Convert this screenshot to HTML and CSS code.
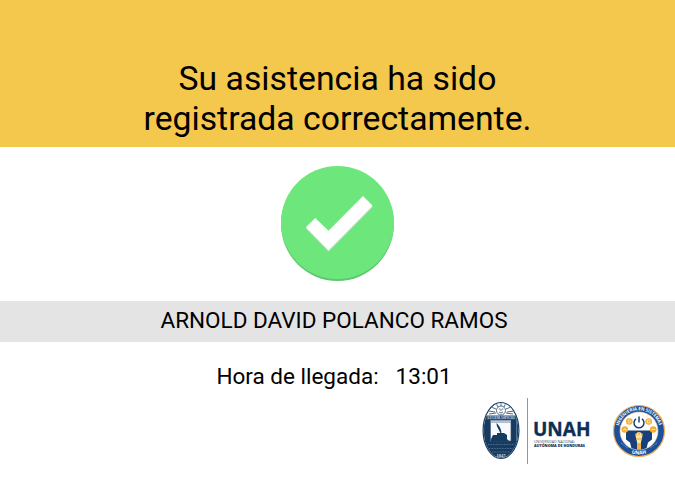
FILE: index.html
```html
<!DOCTYPE html>
<html lang="es">
<head>
<meta charset="utf-8">
<title>Registro de asistencia</title>
<link rel="stylesheet" href="styles.css">
</head>
<body>
<header class="banner">
  <h1 class="title">Su asistencia ha sido<br>registrada correctamente.</h1>
</header>
<main class="content">
  <svg class="check" width="115" height="117" viewBox="0 0 115 117">
    <ellipse cx="57.5" cy="59" rx="56.5" ry="57" fill="#5fc66d"/>
    <ellipse cx="57.5" cy="57.5" rx="56.5" ry="56.5" fill="#6de77b"/>
    <path d="M26 63.5L35.3 54.500L48.500 67.200L83 32.500L92.500 42L48.500 86.500Z" fill="#d5ead8"/>
    <path d="M26 62L35.300 53L48.500 65.700L83 31L92.500 40.500L48.500 85Z" fill="#fff"/>
  </svg>
  <div class="name">ARNOLD DAVID POLANCO RAMOS</div>
  <div class="arrival"><span>Hora de llegada:</span><span>13:01</span></div>
</main>
<footer class="logos">
  <svg class="seal" width="38" height="59" viewBox="482 400 38 59">
    <defs>
      <clipPath id="oval"><ellipse cx="501" cy="429.500" rx="17.300" ry="27.300"/></clipPath>
    </defs>
    <ellipse cx="501" cy="429.500" rx="17.900" ry="28" fill="#fff" stroke="#163d63" stroke-width="1.200"/>
    <g clip-path="url(#oval)">
      <rect x="482" y="440" width="38" height="20" fill="#173b60"/>
      <rect x="484" y="414.500" width="34" height="5" fill="#274b70"/>
      <path d="M485 419h5.500v22h-5.500zM511 419h5.500v22h-5.500z" fill="#173b60"/>
      <path d="M484 420v20M517.500 420v20" stroke="#234669" stroke-width="2"/>
      <path d="M490.500 421h20.500v19h-20.500z" fill="#f7f9fb" stroke="#315275" stroke-width=".7"/>
      <path d="M491 438l2-4h4v-2h7l3 2v4l2 2h-18z" fill="#153a60"/>
      <path d="M500.500 433c-1-5-4-6-4-11 3 3 5 6 5 11z" fill="#153a60"/>
      <g fill="none" stroke="#3d5b7a" stroke-width=".9">
        <path d="M501 401v4M496 402l2 4M506 402l-2 4M491 406l5 2M511 406l-5 2M488 410l7 1M514 410l-7 1M489 413l7-1M513 413l-7-1"/>
        <ellipse cx="501" cy="409.500" rx="4.500" ry="4.500"/>
        <path d="M499 408h1.300M502 408h1.300M499 411q2 2 4 0M501 408v2"/>
      </g>
      <path d="M488 443.500h26M489 447.500h24M492 451h18" stroke="#5d7995" stroke-width=".8" stroke-dasharray="1 .6"/>
    </g>
    <text x="501" y="418.400" class="seal-motto" text-anchor="middle" textLength="27" lengthAdjust="spacingAndGlyphs">LUCEM ASPICIO</text>
    <text x="501" y="455.500" class="seal-year" text-anchor="middle">1847</text>
  </svg>
  <div class="divider"></div>
  <svg class="wordmark" width="58" height="30" viewBox="533 420 58 30">
    <text x="533" y="436" class="unah" textLength="57.500" lengthAdjust="spacingAndGlyphs">UNAH</text>
    <text x="534" y="443" class="sub" textLength="41" lengthAdjust="spacingAndGlyphs">UNIVERSIDAD NACIONAL</text>
    <text x="534" y="447.300" class="sub strong" textLength="51" lengthAdjust="spacingAndGlyphs">AUTÓNOMA DE HONDURAS</text>
  </svg>
  <svg class="badge" width="54" height="54" viewBox="0 0 54 54">
    <defs>
      <path id="topArc" d="M6.200 27a20.800 20.800 0 0 1 41.600 0"/>
      <path id="lowArc" d="M3.500 27a23.500 23.500 0 0 0 47 0"/>
      <clipPath id="disc"><circle cx="27" cy="27" r="18.800"/></clipPath>
    </defs>
    <circle cx="27" cy="27" r="25.500" fill="#1d509c" stroke="#efb55b" stroke-width="1.200"/>
    <circle cx="27" cy="27" r="19" fill="#fff" stroke="#efcf96" stroke-width=".6"/>
    <g clip-path="url(#disc)">
      <path d="M14 26.500h26v9l-4 3-2 8H20l-2-8-4-3z" fill="#183f7c"/>
      <path d="M25 38h4v8h-4z" fill="#f1b04a"/>
    </g>
    <path d="M23.800 33a3.500 3.500 0 1 1 6.400 0l-1.400 6h-3.600z" fill="#fbe2a5"/>
    <path d="M23.300 30l1.500 1M30.700 30l-1.500 1M27 28v3M24 35h6" stroke="#efa92f" stroke-width="1.200"/>
    <path d="M24 14.800a5 5 0 1 0 6 0" fill="none" stroke="#19427c" stroke-width="1.500"/>
    <path d="M27 12.500v6" stroke="#19427c" stroke-width="1.500"/>
    <g fill="#f4ae32"><circle cx="17.300" cy="17.500" r="3.300"/><circle cx="36.700" cy="17.500" r="3.300"/><circle cx="12.800" cy="25.500" r="3.300"/><circle cx="41.200" cy="25.500" r="3.300"/></g>
    <g fill="none" stroke="#fff0cc" stroke-width=".7"><circle cx="17.300" cy="17.500" r="1.400"/><path d="M35.500 16h2.500v3h-2.500zM11 26h1l1-1.500 1 2 1-1M39.200 25.500h4"/></g>
    <text class="badge-text"><textPath href="#topArc" startOffset="50%" text-anchor="middle" textLength="54" lengthAdjust="spacingAndGlyphs">INGENIERÍA EN SISTEMAS</textPath></text>
    <text class="badge-name"><textPath href="#lowArc" startOffset="50%" text-anchor="middle">UNAH</textPath></text>
    <path d="M9 39l7 5M45 39l-7 5" stroke="#8eaad2" stroke-width=".8" stroke-dasharray="1 .6"/>
  </svg>
</footer>
</body>
</html>
```
FILE: styles.css
```css
* { box-sizing: border-box; }

body {
  margin: 0;
  width: 675px;
  height: 480px;
  overflow: hidden;
  background: #fff;
  color: #000;
  font-family: Roboto, "Liberation Sans", sans-serif;
}

.banner {
  height: 147px;
  padding-top: 59px;
  background: #f3c84d;
  text-align: center;
}

.title {
  margin: 0;
  font-size: 33.75px;
  font-weight: 400;
  line-height: 39.5px;
}

.content {
  display: flex;
  flex-direction: column;
  align-items: center;
  height: 250px;
}

.check { display: block; margin-top: 18px; flex: none; }

.name {
  width: 100%;
  height: 41px;
  margin-top: 19px;
  padding-right: 7px;
  background: #e4e4e4;
  font-size: 22.5px;
  line-height: 38px;
  text-align: center;
}

.arrival {
  display: flex;
  gap: 17px;
  margin-top: 21px;
  padding-right: 7px;
  font-size: 22.5px;
  line-height: 26px;
}

.logos {
  display: flex;
  align-items: center;
  height: 67px;
  padding-left: 482px;
}

.logos svg { display: block; flex: none; overflow: visible; }

.seal { margin-top: -1px; }

.divider {
  width: 1px;
  height: 66px;
  margin-left: 7px;
  background: #8798aa;
}

.wordmark { margin: 9px 0 0 5px; }

.badge { margin-left: 21px; }

.seal-motto { font: 700 3.6px "Liberation Serif", serif; fill: #d7e0e9; }
.seal-year { font: 700 4.5px "Liberation Serif", serif; fill: #d7e0e9; }
.unah { font: 700 19.5px "Open Sans", sans-serif; fill: #0c2f54; stroke: #0c2f54; stroke-width: .35px; }
.sub { font: 400 4.2px "Open Sans", sans-serif; fill: #34516f; }
.strong { font-weight: 800; fill: #0c2f54; }
.badge-text { font: 700 4.6px "Open Sans", sans-serif; fill: #fff; }
.badge-name { font: 700 5px "Open Sans", sans-serif; fill: #fff; }
```
